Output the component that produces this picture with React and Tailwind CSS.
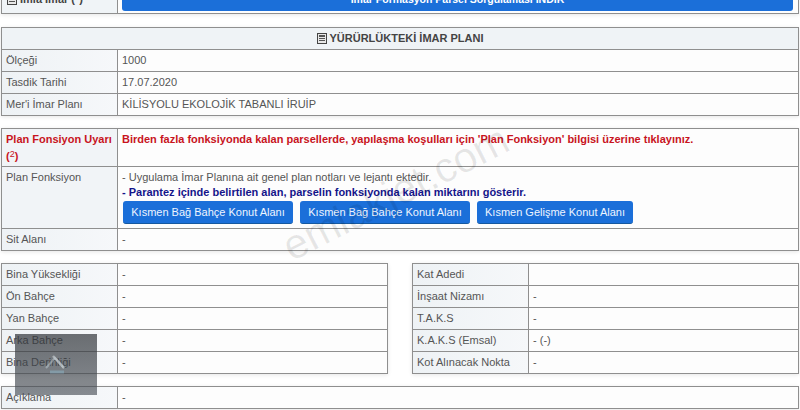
const font = { fontFamily: '"Liberation Sans", Arial, sans-serif' };

function Cell({ label, value, labelClass = "", first }) {
  return (
    <div className={`flex ${first ? "h-[21px]" : "h-[22px] border-t border-[#8f8f8f]"}`}>
      <div className={`w-[116px] shrink-0 border-r border-[#8f8f8f] bg-gradient-to-r from-[#eef2f5] to-[#f6f8fa] pl-[4px] leading-[21px] ${labelClass}`}>{label}</div>
      <div className="flex-1 pl-[4px] leading-[21px]">{value}</div>
    </div>
  );
}

function Box({ children, className = "" }) {
  return <div className={`border border-[#8f8f8f] bg-[#fdfdfd] shadow-[0_1px_4px_rgba(0,0,0,0.10)] ${className}`}>{children}</div>;
}

function DocIcon() {
  return (
    <svg width="10" height="11" viewBox="0 0 10 11" className="mr-[3px]">
      <rect x="0.5" y="0.5" width="9" height="10" fill="#e8e8e8" stroke="#444" />
      <rect x="2" y="2" width="6" height="2" fill="#555" />
      <path d="M2 5.5h6M2 7.5h6" stroke="#555" strokeWidth="1" />
    </svg>
  );
}

function Btn({ children, w }) {
  return (
    <button className={`${w} h-[23px] rounded-[3px] bg-[#1b6fd9] text-[#eef5ff] text-[11px] leading-[22px] text-center border-b border-[#15589f]`}>
      {children}
    </button>
  );
}

export default function App() {
  return (
    <div style={font} className="relative w-[800px] h-[410px] overflow-hidden bg-white text-[11px] text-[#555] px-[1px]">
      <div className="flex flex-col gap-[12px] -mt-[9px]">
        <Box className="h-[23px]">
          <div className="flex h-full">
            <div className="w-[116px] shrink-0 border-r border-[#8f8f8f] bg-[#f0f4f7] pl-[5px] flex items-start">
              <span className="flex items-center font-bold text-[#444] leading-[14px]"><DocIcon />İmla İmar (*)</span>
            </div>
            <div className="flex-1 pl-[4px] pr-[5px] pb-[2px]">
              <div className="h-full rounded-[3px] bg-[#1b6fd9] text-white font-bold text-center text-[10.5px] leading-[15px]">İmar Formasyon Parsel Sorgulaması İNDİR</div>
            </div>
          </div>
        </Box>

        <Box className="mt-[1px]">
          <div className="h-[21px] bg-[#eff3f6] flex items-center justify-center font-bold text-[#444] text-[11px]">
            <DocIcon />YÜRÜRLÜKTEKİ İMAR PLANI
          </div>
          <Cell label="Ölçeği" value="1000" />
          <Cell label="Tasdik Tarihi" value="17.07.2020" />
          <Cell label="Mer'i İmar Planı" value="KİLİSYOLU EKOLOJİK TABANLI İRUİP" />
        </Box>

        <Box>
          <div className="flex h-[37px]">
            <div className="w-[116px] shrink-0 border-r border-[#8f8f8f] bg-[#f1f4f7] pl-[4px] pt-[3px] leading-[15px] font-bold text-[#c8141e]">
              Plan Fonsiyon Uyarı (<span className="text-[9px] font-normal align-[3px]">2</span>)
            </div>
            <div className="flex-1 pl-[4px] pt-[3px] leading-[15px] font-bold text-[#c8141e]">
              Birden fazla fonksiyonda kalan parsellerde, yapılaşma koşulları için 'Plan Fonksiyon' bilgisi üzerine tıklayınız.
            </div>
          </div>
          <div className="flex h-[62px] border-t border-[#8f8f8f]">
            <div className="w-[116px] shrink-0 border-r border-[#8f8f8f] bg-[#f1f4f7] pl-[4px] pt-[3px] leading-[15px]">Plan Fonksiyon</div>
            <div className="flex-1 pl-[4px] pt-[3px]">
              <div className="leading-[14px]">- Uygulama İmar Planına ait genel plan notları ve lejantı ektedir.</div>
              <div className="leading-[15px] mt-[1px] font-bold text-[#14148a]">- Parantez içinde belirtilen alan, parselin fonksiyonda kalan miktarını gösterir.</div>
              <div className="flex gap-[7px] mt-[1px] pl-[1px]">
                <Btn w="w-[170px]">Kısmen Bağ Bahçe Konut Alanı</Btn>
                <Btn w="w-[170px]">Kısmen Bağ Bahçe Konut Alanı</Btn>
                <Btn w="w-[156px]">Kısmen Gelişme Konut Alanı</Btn>
              </div>
            </div>
          </div>
          <Cell label="Sit Alanı" value="-" />
        </Box>

        <div className="flex justify-between">
          <Box className="w-[387px]">
            <Cell first label="Bina Yüksekliği" value="-" />
            <Cell label="Ön Bahçe" value="-" />
            <Cell label="Yan Bahçe" value="-" />
            <Cell label="Arka Bahçe" value="-" />
            <Cell label="Bina Derinliği" value="-" />
          </Box>
          <Box className="w-[387px]">
            <Cell first label="Kat Adedi" value="" />
            <Cell label="İnşaat Nizamı" value="-" />
            <Cell label="T.A.K.S" value="-" />
            <Cell label="K.A.K.S (Emsal)" value="- (-)" />
            <Cell label="Kot Alınacak Nokta" value="-" />
          </Box>
        </div>

        <Box>
          <Cell first label="Açıklama" value="-" />
        </Box>
      </div>

      <div className="absolute left-[272px] top-[172px] -rotate-[27deg] text-[42px] leading-none text-black/[0.09] pointer-events-none whitespace-nowrap">emlakjet.com</div>

      <div className="absolute left-[15px] top-[334px] w-[82px] h-[61px] bg-gradient-to-b from-[#2f3338]/70 to-[#4a5058]/65 flex items-center justify-center">
        <svg width="24" height="22" viewBox="0 0 24 22" className="opacity-70">
          <path d="M2 14 L11 4 L20 14" fill="none" stroke="#cfdfe8" strokeWidth="2" opacity="0.6" />
          <path d="M9 2 L20 14" stroke="#e6eef3" strokeWidth="2.5" opacity="0.7" />
          <path d="M6 18h14" stroke="#8fb8cc" strokeWidth="3" opacity="0.7" />
        </svg>
      </div>
    </div>
  );
}
